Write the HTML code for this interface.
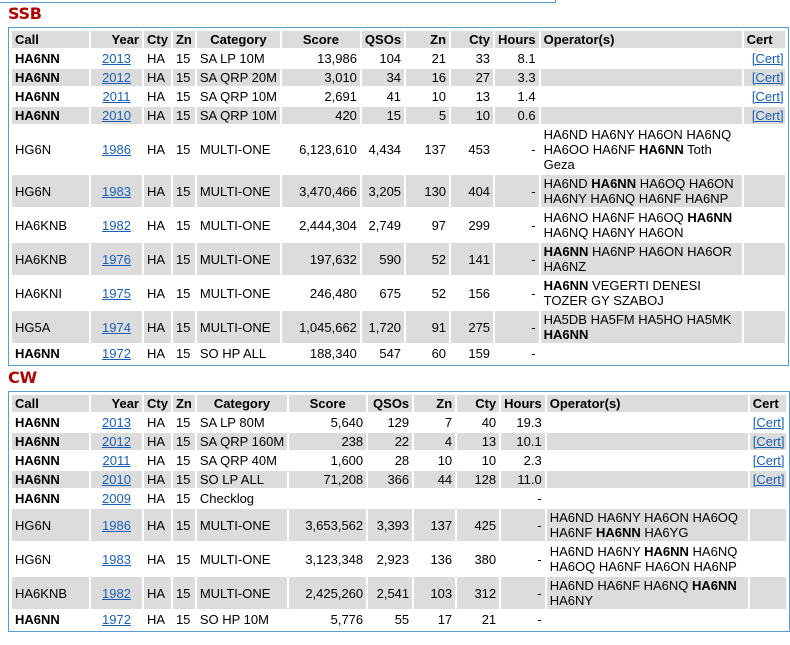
<!DOCTYPE html>
<html><head><meta charset="utf-8"><style>
body{margin:0;background:#fff;font-family:"Liberation Sans",Arial,sans-serif;font-size:13px;color:#000;width:790px;height:645px;overflow:hidden;position:relative}
.top{position:absolute;left:-1px;top:-10px;width:555px;height:11px;border:1px solid #5b9bd5}
h2{position:absolute;left:8px;margin:0;font-size:16px;font-weight:bold;color:#b00000;font-family:"DejaVu Sans","Liberation Sans",sans-serif;letter-spacing:-0.3px}
.box{position:absolute;left:8px;border:1px solid #5b9bd5;padding:1px}
table{border-collapse:separate;border-spacing:2px;table-layout:fixed}
td,th{padding:1px 3px;line-height:15px;vertical-align:middle;overflow:hidden;white-space:nowrap}
th{background:#dcdcdc;font-weight:bold}
tr.g td{background:#dcdcdc}
.l{text-align:left}.c{text-align:center}.r{text-align:right}
td.op{white-space:normal}
a{color:#1a5fb4;text-decoration:underline}
b{font-weight:bold}
td:nth-child(2){text-align:center}
td:nth-child(n+6):nth-child(-n+10){text-align:right}
td:nth-child(12){text-align:right;padding-right:1px}
</style></head><body>
<div class="top"></div>
<h2 style="top:4px">SSB</h2>
<div class="box" style="top:27px">
<table>
<colgroup><col style="width:77px"><col style="width:51px"><col style="width:22px"><col style="width:21px"><col style="width:81px"><col style="width:78px"><col style="width:42px"><col style="width:43px"><col style="width:42px"><col style="width:40px"><col style="width:201px"><col style="width:41px"></colgroup>
<tr><th class="l">Call</th><th class="r">Year</th><th>Cty</th><th>Zn</th><th class="c">Category</th><th class="c">Score</th><th class="r">QSOs</th><th class="r">Zn</th><th class="r">Cty</th><th class="r">Hours</th><th class="l">Operator(s)</th><th class="l">Cert</th></tr>
<tr><td><b>HA6NN</b></td><td><a>2013</a></td><td>HA</td><td>15</td><td>SA LP 10M</td><td>13,986</td><td>104</td><td>21</td><td>33</td><td>8.1</td><td class="op"></td><td><a>[Cert]</a></td></tr>
<tr class="g"><td><b>HA6NN</b></td><td><a>2012</a></td><td>HA</td><td>15</td><td>SA QRP 20M</td><td>3,010</td><td>34</td><td>16</td><td>27</td><td>3.3</td><td class="op"></td><td><a>[Cert]</a></td></tr>
<tr><td><b>HA6NN</b></td><td><a>2011</a></td><td>HA</td><td>15</td><td>SA QRP 10M</td><td>2,691</td><td>41</td><td>10</td><td>13</td><td>1.4</td><td class="op"></td><td><a>[Cert]</a></td></tr>
<tr class="g"><td><b>HA6NN</b></td><td><a>2010</a></td><td>HA</td><td>15</td><td>SA QRP 10M</td><td>420</td><td>15</td><td>5</td><td>10</td><td>0.6</td><td class="op"></td><td><a>[Cert]</a></td></tr>
<tr><td>HG6N</td><td><a>1986</a></td><td>HA</td><td>15</td><td>MULTI-ONE</td><td>6,123,610</td><td>4,434</td><td>137</td><td>453</td><td>-</td><td class="op">HA6ND HA6NY HA6ON HA6NQ HA6OO HA6NF <b>HA6NN</b> Toth Geza</td><td></td></tr>
<tr class="g"><td>HG6N</td><td><a>1983</a></td><td>HA</td><td>15</td><td>MULTI-ONE</td><td>3,470,466</td><td>3,205</td><td>130</td><td>404</td><td>-</td><td class="op">HA6ND <b>HA6NN</b> HA6OQ HA6ON HA6NY HA6NQ HA6NF HA6NP</td><td></td></tr>
<tr><td>HA6KNB</td><td><a>1982</a></td><td>HA</td><td>15</td><td>MULTI-ONE</td><td>2,444,304</td><td>2,749</td><td>97</td><td>299</td><td>-</td><td class="op">HA6NO HA6NF HA6OQ <b>HA6NN</b> HA6NQ HA6NY HA6ON</td><td></td></tr>
<tr class="g"><td>HA6KNB</td><td><a>1976</a></td><td>HA</td><td>15</td><td>MULTI-ONE</td><td>197,632</td><td>590</td><td>52</td><td>141</td><td>-</td><td class="op"><b>HA6NN</b> HA6NP HA6ON HA6OR HA6NZ</td><td></td></tr>
<tr><td>HA6KNI</td><td><a>1975</a></td><td>HA</td><td>15</td><td>MULTI-ONE</td><td>246,480</td><td>675</td><td>52</td><td>156</td><td>-</td><td class="op"><b>HA6NN</b> VEGERTI DENESI TOZER GY SZABOJ</td><td></td></tr>
<tr class="g"><td>HG5A</td><td><a>1974</a></td><td>HA</td><td>15</td><td>MULTI-ONE</td><td>1,045,662</td><td>1,720</td><td>91</td><td>275</td><td>-</td><td class="op">HA5DB HA5FM HA5HO HA5MK <b>HA6NN</b></td><td></td></tr>
<tr><td><b>HA6NN</b></td><td><a>1972</a></td><td>HA</td><td>15</td><td>SO HP ALL</td><td>188,340</td><td>547</td><td>60</td><td>159</td><td>-</td><td class="op"></td><td></td></tr>
</table></div>
<h2 style="top:368px">CW</h2>
<div class="box" style="top:391px">
<table>
<colgroup><col style="width:77px"><col style="width:51px"><col style="width:22px"><col style="width:21px"><col style="width:88px"><col style="width:77px"><col style="width:44px"><col style="width:41px"><col style="width:42px"><col style="width:40px"><col style="width:201px"><col style="width:34px"></colgroup>
<tr><th class="l">Call</th><th class="r">Year</th><th>Cty</th><th>Zn</th><th class="c">Category</th><th class="c">Score</th><th class="r">QSOs</th><th class="r">Zn</th><th class="r">Cty</th><th class="r">Hours</th><th class="l">Operator(s)</th><th class="l">Cert</th></tr>
<tr><td><b>HA6NN</b></td><td><a>2013</a></td><td>HA</td><td>15</td><td>SA LP 80M</td><td>5,640</td><td>129</td><td>7</td><td>40</td><td>19.3</td><td class="op"></td><td><a>[Cert]</a></td></tr>
<tr class="g"><td><b>HA6NN</b></td><td><a>2012</a></td><td>HA</td><td>15</td><td>SA QRP 160M</td><td>238</td><td>22</td><td>4</td><td>13</td><td>10.1</td><td class="op"></td><td><a>[Cert]</a></td></tr>
<tr><td><b>HA6NN</b></td><td><a>2011</a></td><td>HA</td><td>15</td><td>SA QRP 40M</td><td>1,600</td><td>28</td><td>10</td><td>10</td><td>2.3</td><td class="op"></td><td><a>[Cert]</a></td></tr>
<tr class="g"><td><b>HA6NN</b></td><td><a>2010</a></td><td>HA</td><td>15</td><td>SO LP ALL</td><td>71,208</td><td>366</td><td>44</td><td>128</td><td>11.0</td><td class="op"></td><td><a>[Cert]</a></td></tr>
<tr><td><b>HA6NN</b></td><td><a>2009</a></td><td>HA</td><td>15</td><td>Checklog</td><td></td><td></td><td></td><td></td><td>-</td><td class="op"></td><td></td></tr>
<tr class="g"><td>HG6N</td><td><a>1986</a></td><td>HA</td><td>15</td><td>MULTI-ONE</td><td>3,653,562</td><td>3,393</td><td>137</td><td>425</td><td>-</td><td class="op">HA6ND HA6NY HA6ON HA6OQ HA6NF <b>HA6NN</b> HA6YG</td><td></td></tr>
<tr><td>HG6N</td><td><a>1983</a></td><td>HA</td><td>15</td><td>MULTI-ONE</td><td>3,123,348</td><td>2,923</td><td>136</td><td>380</td><td>-</td><td class="op">HA6ND HA6NY <b>HA6NN</b> HA6NQ HA6OQ HA6NF HA6ON HA6NP</td><td></td></tr>
<tr class="g"><td>HA6KNB</td><td><a>1982</a></td><td>HA</td><td>15</td><td>MULTI-ONE</td><td>2,425,260</td><td>2,541</td><td>103</td><td>312</td><td>-</td><td class="op">HA6ND HA6NF HA6NQ <b>HA6NN</b> HA6NY</td><td></td></tr>
<tr><td><b>HA6NN</b></td><td><a>1972</a></td><td>HA</td><td>15</td><td>SO HP 10M</td><td>5,776</td><td>55</td><td>17</td><td>21</td><td>-</td><td class="op"></td><td></td></tr>
</table></div>
</body></html>
